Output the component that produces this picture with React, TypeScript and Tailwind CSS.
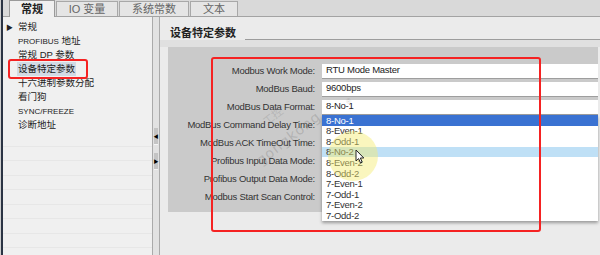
import React from 'react';

const treeItems = [
  { label: '常规', arrow: true },
  { label: 'PROFIBUS 地址', latin: 'PROFIBUS', rest: ' 地址' },
  { label: '常规 DP 参数' },
  { label: '设备特定参数', selected: true },
  { label: '十六进制参数分配' },
  { label: '看门狗' },
  { label: 'SYNC/FREEZE', latin: 'SYNC/FREEZE', rest: '' },
  { label: '诊断地址' },
];

const params = [
  { label: 'Modbus Work Mode:', value: 'RTU Mode Master' },
  { label: 'ModBus Baud:', value: '9600bps' },
  { label: 'ModBus Data Format:', value: '8-No-1' },
  { label: 'ModBus Command Delay Time:', value: '' },
  { label: 'ModBus ACK TimeOut Time:', value: '' },
  { label: 'Profibus Input Data Mode:', value: '' },
  { label: 'Profibus Output Data Mode:', value: '' },
  { label: 'Modbus Start Scan Control:', value: '' },
];

const formats = ['8-No-1', '8-Even-1', '8-Odd-1', '8-No-2', '8-Even-2', '8-Odd-2', '7-Even-1', '7-Odd-1', '7-Even-2', '7-Odd-2'];

const tabs = [
  { label: '常规', w: 'w-[46px]', active: true },
  { label: 'IO 变量', w: 'w-[62px]' },
  { label: '系统常数', w: 'w-[70px]' },
  { label: '文本', w: 'w-[48px]' },
];

export default function App() {
  return (
    <div className="relative w-[600px] h-[255px] overflow-hidden flex bg-[#ececec] font-['Liberation_Sans','Noto_Sans_CJK_SC',sans-serif]">
      {/* left window edge */}
      <div className="w-[1px] bg-[#cfcfcf]" />
      <div className="w-[2px] bg-[#2b3444]" />

      <div className="flex-1 flex flex-col">
        {/* tabs */}
        <div className="h-[17px] bg-[#d9d9d9] border-b border-[#a3a3a3] flex items-end pl-[6px] gap-[1px]">
          {tabs.map((t) =>
            t.active ? (
              <div
                key={t.label}
                className={`${t.w} h-[17px] -mb-px bg-[#f0f0f0] border border-b-0 border-[#9a9a9a] flex items-center justify-center text-[11px] font-bold text-[#222]`}
              >
                {t.label}
              </div>
            ) : (
              <div
                key={t.label}
                className={`${t.w} h-[15px] bg-[#e5e5e5] border border-b-0 border-[#a8a8a8] flex items-center justify-center text-[11px] text-[#666]`}
              >
                {t.label}
              </div>
            )
          )}
        </div>

        <div className="flex-1 flex">
          {/* tree */}
          <div className="w-[149px] bg-[#f0f0f0] pt-[3px] flex flex-col">
            {treeItems.map((it) => (
              <div key={it.label} className="h-[14px] flex items-center text-[9.5px] text-[#222] leading-none">
                <span className="w-[15px] pl-[3px] text-[7px] text-[#222]">{it.arrow ? '▶' : ''}</span>
                {it.latin !== undefined ? (
                  <span>
                    <span className="text-[8px]">{it.latin}</span>
                    {it.rest}
                  </span>
                ) : it.selected ? (
                  <span className="bg-[#d2dae4] px-[1px] -ml-[1px] py-[2px]">{it.label}</span>
                ) : (
                  <span>{it.label}</span>
                )}
              </div>
            ))}
            {Array.from({ length: 9 }).map((_, i) => (
              <div key={i} className="h-[14.5px] border-b border-[#e7e7e7]" />
            ))}
          </div>

          {/* splitter */}
          <div className="w-[8px] border-l border-r border-[#aaaaaa] bg-[#e2e2e2] flex flex-col items-center pt-[111px] gap-[8px]">
            <div className="w-[4px] h-[17px] bg-[#c4c4c4] border-b border-[#f4f4f4] flex items-center justify-center text-[5px] text-black leading-none">◀</div>
            <div className="w-[4px] h-[17px] bg-[#c4c4c4] border-b border-[#f4f4f4] flex items-center justify-center text-[5px] text-black leading-none">▶</div>
          </div>

          {/* parameter area */}
          <div className="flex-1 flex flex-col bg-[#ebebeb]">
            <div className="h-[23px] flex items-end pl-[10px]">
              <span className="text-[11px] font-bold leading-[14px] text-[#222]">设备特定参数</span>
              <div className="flex-1 h-[1px] bg-[#9c9c9c] ml-[9px]" />
            </div>
            <div className="h-[7px] bg-[#e0e0e0]" />
            <div className="ml-[8px] mr-[2px] h-[165px] bg-[#cacaca] pt-[17px] flex flex-col gap-[4px]">
              {params.map((p) => (
                <div key={p.label} className="h-[14px] flex items-center">
                  <div className="w-[147px] text-right text-[9.5px] tracking-[-0.25px] text-[#333] leading-none">{p.label}</div>
                  <div className="ml-[7px] flex-1 h-[15px] bg-white border-b border-[#9e9e9e] flex items-center pl-[4px] text-[9.5px] tracking-[-0.25px] text-[#222]">
                    {p.value}
                  </div>
                </div>
              ))}
            </div>
          </div>
        </div>
      </div>

      {/* open format list */}
      <div className="absolute left-[322px] top-[115px] w-[276px] bg-white shadow-[0_2px_3px_rgba(0,0,0,0.35)] flex flex-col">
        {formats.map((f, i) => (
          <div
            key={f}
            className={`h-[10.6px] flex items-center pl-[4px] text-[9.5px] tracking-[-0.25px] leading-none ${
              i === 0 ? 'bg-[#3a72d2] text-white' : i === 3 ? 'bg-[#bfe0f6] text-[#333]' : 'text-[#333]'
            }`}
          >
            {f}
          </div>
        ))}
      </div>

      {/* cursor highlight */}
      <div className="absolute left-[328px] top-[131px] w-[50px] h-[50px] rounded-full bg-[rgba(245,235,110,0.45)]" />
      <svg className="absolute left-[355px] top-[149px]" width="10" height="15" viewBox="0 0 10 15">
        <path d="M1 1 L1 12 L3.6 9.6 L5.5 14 L7.2 13.2 L5.4 9 L8.8 9 Z" fill="#fff" stroke="#222" strokeWidth="1" strokeLinejoin="round" />
      </svg>

      {/* watermark */}
      <div className="absolute left-[250px] top-[128px] -rotate-[38deg] text-[14px] text-[rgba(120,120,120,0.3)] tracking-[1px] font-['DejaVu_Sans',sans-serif]">
        gongkong
      </div>
      <div className="absolute left-[262px] top-[108px] -rotate-[38deg] text-[11px] text-[rgba(120,120,120,0.25)]">工控</div>
      <div className="absolute left-[346px] top-[97px] text-[7px] text-[rgba(120,120,120,0.35)]">®</div>

      {/* annotation boxes */}
      <div className="absolute left-[8px] top-[59px] w-[80px] h-[20px] border-2 border-[#f52222] rounded-[3px]" />
      <div className="absolute left-[211px] top-[57px] w-[330px] h-[175px] border-2 border-[#f52222] rounded-[3px]" />
    </div>
  );
}
